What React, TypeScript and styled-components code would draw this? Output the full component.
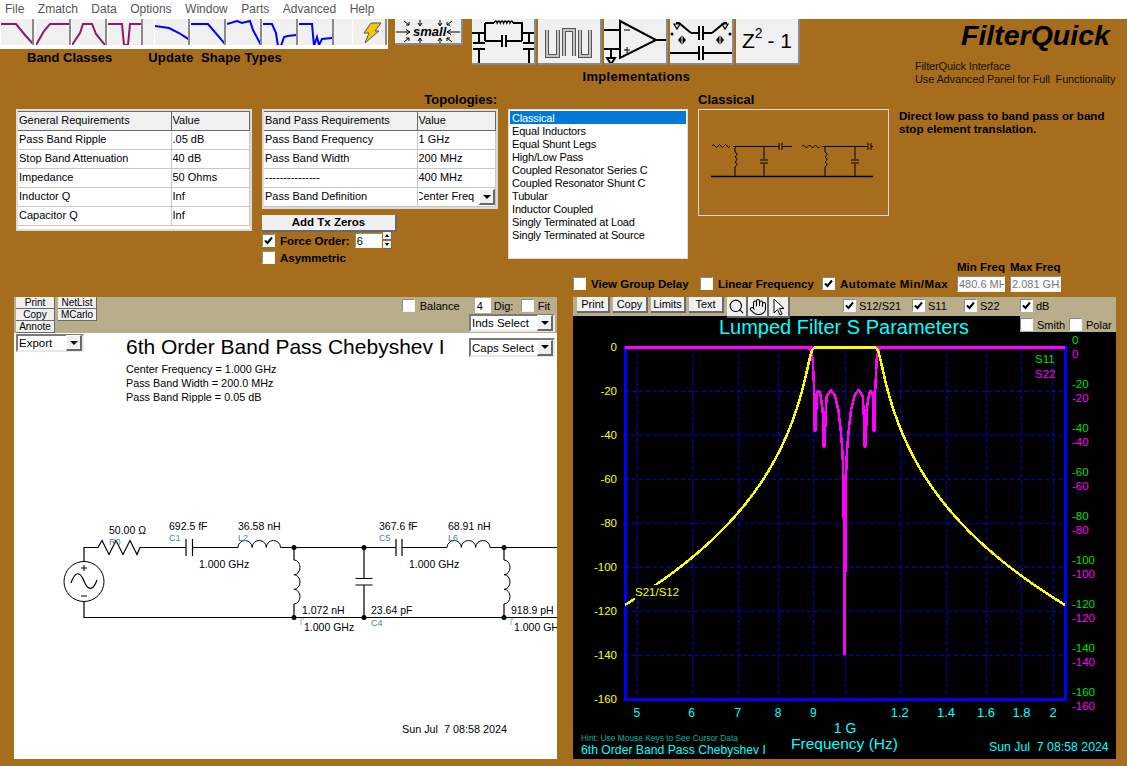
import React from 'react';
import styled, {createGlobalStyle} from 'styled-components';
import {Hand, Search} from 'lucide-react';

const BROWN = '#a56d1c';
const TAN = '#b8ae8b';
const FACE = '#f0f0f0';
const SANS = '"Liberation Sans", Arial, sans-serif';

const GlobalStyle = createGlobalStyle`
  html, body {
    margin: 0;
    padding: 0;
    overflow: hidden;
    background: ${BROWN};
  }
`;

const Page = styled.div`
  width: 1127px;
  height: 766px;
  display: flex;
  flex-direction: column;
  background: ${BROWN};
  font-family: ${SANS};
  font-size: 11px;
  color: #000;
`;

// ---------------- menu ----------------

const MenuBar = styled.div`
  height: 19px;
  flex: none;
  display: flex;
  align-items: flex-start;
  gap: 13.5px;
  padding-left: 5px;
  background: #fff;
  font-size: 12px;
  line-height: 18px;
  color: #555;
`;

// ---------------- top toolbars ----------------

const TopRow = styled.div`
  height: 73px;
  flex: none;
  display: flex;
`;

const ShapeTools = styled.div`
  width: 388px;
  flex: none;
`;

const ToolStrip = styled.div`
  height: 30px;
  background: #fff;
`;

const ToolFace = styled.div`
  height: 26px;
  width: 386px;
  display: flex;
  background: ${FACE};
`;

const ToolButton = styled.div<{ $width: number; $gap?: number }>`
  width: ${props => props.$width}px;
  margin-left: ${props => props.$gap || 0}px;
  height: 26px;
  flex: none;
  box-sizing: border-box;
  border-right: 2px solid #8a8a8a;
  border-left: 1px solid #fff;
  overflow: hidden;

  svg {
    display: block;
  }
`;

const ToolLabels = styled.div`
  display: flex;
  gap: 36px;
  padding: 1px 0 0 27px;
`;

const BoldLabel = styled.div`
  font-size: 13px;
  line-height: 16px;
  font-weight: bold;
  white-space: pre;
`;

const ShapeLabel = styled(BoldLabel)`
  letter-spacing: 0.17px;
`;

const SmallButton = styled.div`
  width: 68px;
  height: 26px;
  flex: none;
  margin-left: 7px;
  box-sizing: border-box;
  background: ${FACE};
  border-right: 2px solid #8a8a8a;
  border-bottom: 2px solid #8a8a8a;

  svg {
    display: block;
  }
`;

const Implementations = styled.div`
  width: 329px;
  flex: none;
  margin-left: 9px;
  display: flex;
  flex-direction: column;
  align-items: center;
`;

const ImplRow = styled.div`
  display: flex;
  gap: 2px;
  width: 329px;
`;

const ImplButton = styled.div`
  width: 64px;
  height: 46px;
  flex: none;
  box-sizing: border-box;
  background: ${FACE};
  border-right: 2px solid #8a8a8a;
  border-bottom: 2px solid #8a8a8a;
  display: flex;
  align-items: center;
  justify-content: center;
  overflow: hidden;
  font-size: 21px;
  white-space: nowrap;

  svg {
    display: block;
    flex: none;
  }

  sup {
    font-size: 14px;
    line-height: 1;
    position: relative;
    top: -8px;
    margin-right: 5px;
  }
`;

const ImplLabel = styled(BoldLabel)`
  margin-top: 4px;
  letter-spacing: 0.3px;
`;

const Brand = styled.div`
  margin-left: 114px;
  flex: 1;
  display: flex;
  flex-direction: column;
`;

const BrandName = styled.div`
  font-size: 28.500px;
  line-height: 33px;
  font-weight: bold;
  font-style: italic;
  margin: 0 0 8px 46px;
`;

const BrandText = styled.div`
  font-size: 11px;
  line-height: 13px;
  letter-spacing: -0.15px;
  color: #1a1208;
  white-space: pre;
`;

// ---------------- requirements row ----------------

const RequirementsRow = styled.div`
  height: 169px;
  flex: none;
  display: flex;
  gap: 10px;
  padding: 0 0 0 16px;
`;

const Column = styled.div<{ $width: number }>`
  width: ${props => props.$width}px;
  flex: none;
  display: flex;
  flex-direction: column;
`;

const ColumnHead = styled(BoldLabel)<{ $right?: boolean }>`
  height: 17px;
  flex: none;
  text-align: ${props => props.$right ? 'right' : 'left'};
  padding-right: ${props => props.$right ? 1 : 0}px;
`;

const TableFrame = styled.div`
  width: 236px;
  flex: none;
  box-sizing: border-box;
  border: 2px solid #dcdcdc;
  background: #fff;
  overflow: hidden;
`;

const Table = styled.table`
  width: 232px;
  table-layout: fixed;
  border-collapse: collapse;
  font-size: 11px;

  col:first-child {
    width: 153px;
  }
`;

const HeadCell = styled.th`
  height: 19px;
  padding: 0 0 2px 1px;
  box-sizing: border-box;
  text-align: left;
  font-weight: normal;
  background: ${FACE};
  border-top: 1px solid #696969;
  border-right: 1px solid #696969;
  border-bottom: 1px solid #696969;
  white-space: nowrap;
`;

const Cell = styled.td`
  height: 19px;
  padding: 0 0 2px 1px;
  box-sizing: border-box;
  border-right: 1px solid #c8c8c8;
  border-bottom: 1px solid #c8c8c8;
  white-space: nowrap;
  overflow: hidden;
`;

const DropCell = styled(Cell)`
  padding-bottom: 0;
`;

const GridTail = styled.div`
  height: 3px;
`;

const ClippedValue = styled.div`
  display: flex;
  align-items: center;
  justify-content: space-between;
  overflow: hidden;

  span {
    margin: 0 0 2px -3px;
  }
`;

const ArrowButton = styled.div`
  width: 16px;
  height: 16px;
  flex: none;
  box-sizing: border-box;
  background: ${FACE};
  border-right: 2px solid #696969;
  border-bottom: 2px solid #696969;
  border-top: 1px solid #fff;
  border-left: 1px solid #fff;
  display: flex;
  align-items: center;
  justify-content: center;

  &::after {
    content: '';
    border-left: 4px solid transparent;
    border-right: 4px solid transparent;
    border-top: 4px solid #000;
  }
`;

const AddButton = styled.div`
  width: 135px;
  height: 17px;
  flex: none;
  margin-top: 6px;
  box-sizing: border-box;
  background: ${FACE};
  border-right: 2px solid #696969;
  border-bottom: 2px solid #696969;
  text-align: center;
  font-size: 11.500px;
  line-height: 15px;
  font-weight: bold;
`;

const ToggleRow = styled.label<{ $width?: number; $bold?: boolean; $gap?: number; $spacing?: number }>`
  display: flex;
  align-items: center;
  height: 17px;
  flex: none;
  width: ${props => props.$width ? props.$width + 'px' : 'auto'};
  gap: ${props => props.$gap || 4}px;
  font-size: ${props => props.$bold ? 11.5 : 11}px;
  font-weight: ${props => props.$bold ? 'bold' : 'normal'};
  letter-spacing: ${props => props.$spacing || 0}px;
  white-space: nowrap;
`;

const CheckBox = styled.span`
  width: 13px;
  height: 13px;
  flex: none;
  box-sizing: border-box;
  background: #fff;
  border: 1px solid;
  border-color: #8a8a8a #f4f4f4 #f4f4f4 #8a8a8a;

  svg {
    display: block;
  }
`;

const Check = ({on}: { on?: boolean }) => (
    <CheckBox>
        {on && <svg width="11" height="11" viewBox="0 0 11 11">
            <path d="M2 5.500 L4.500 8 L9 2.500" fill="none" stroke="#000" strokeWidth="2"/>
        </svg>}
    </CheckBox>
);

const SpinInput = styled.div`
  width: 27px;
  height: 15px;
  box-sizing: border-box;
  background: #fff;
  border: 1px solid;
  border-color: #8a8a8a #f4f4f4 #f4f4f4 #8a8a8a;
  padding-left: 1px;
  font-size: 11px;
  font-weight: normal;
  line-height: 14px;
`;

const Spinner = styled.div`
  width: 9px;
  height: 17px;
  margin-left: -4px;
  display: flex;
  flex-direction: column;
  gap: 1px;

  span {
    flex: 1;
    background: ${FACE};
    border-right: 1px solid #696969;
    border-bottom: 1px solid #696969;
    display: flex;
    align-items: center;
    justify-content: center;
  }
`;

const SpinUp = styled.i`
  border-left: 2px solid transparent;
  border-right: 2px solid transparent;
  border-bottom: 3px solid #000;
`;

const SpinDown = styled.i`
  border-left: 2px solid transparent;
  border-right: 2px solid transparent;
  border-top: 3px solid #000;
`;

const ListBox = styled.div`
  width: 180px;
  height: 150px;
  flex: none;
  box-sizing: border-box;
  background: #fff;
  border: 1px solid #dcdcdc;
  padding: 1px 1px 0 1px;
  overflow: hidden;
`;

const ListItem = styled.div<{ $selected?: boolean }>`
  height: 13px;
  line-height: 14px;
  padding-left: 2px;
  font-size: 11px;
  letter-spacing: -0.17px;
  white-space: nowrap;
  background: ${props => props.$selected ? '#0078d7' : 'transparent'};
  color: ${props => props.$selected ? '#fff' : '#000'};
`;

const TopologyBox = styled.div`
  width: 191px;
  height: 107px;
  flex: none;
  box-sizing: border-box;
  border: 1px solid #d8d8d8;

  svg {
    display: block;
  }
`;

const Description = styled.div`
  margin-top: 17px;
  font-size: 11.600px;
  line-height: 13px;
  font-weight: bold;
  width: 215px;
`;

// ---------------- view options ----------------

const OptionsRow = styled.div`
  height: 36px;
  flex: none;
  display: flex;
  align-items: flex-end;
  padding: 0 0 5px 573px;
  box-sizing: border-box;
`;

const FreqColumn = styled.div<{ $width: number }>`
  width: ${props => props.$width}px;
  flex: none;
  margin-right: 5px;
  display: flex;
  flex-direction: column;
  gap: 3px;
  font-size: 11.500px;
  font-weight: bold;
  line-height: 12px;
  white-space: nowrap;
`;

const FreqInput = styled.div`
  height: 16px;
  box-sizing: border-box;
  background: #fff;
  border: 1px solid;
  border-color: #8a8a8a #f4f4f4 #f4f4f4 #8a8a8a;
  padding-left: 1px;
  overflow: hidden;
  font-size: 11px;
  font-weight: normal;
  line-height: 14px;
  color: #777;
`;

// ---------------- panels ----------------

const Panels = styled.div`
  height: 462px;
  flex: none;
  display: flex;
  gap: 16px;
  padding-left: 14px;
`;

const SchematicPanel = styled.div`
  width: 543px;
  flex: none;
  display: flex;
  flex-direction: column;
`;

const SchematicBar = styled.div`
  height: 36px;
  flex: none;
  display: flex;
  gap: 3px;
  padding-left: 2px;
  background: ${TAN};
`;

const MiniColumn = styled.div`
  display: flex;
  flex-direction: column;
`;

const MiniButton = styled.div`
  width: 39px;
  height: 12px;
  box-sizing: border-box;
  background: ${FACE};
  border-right: 1px solid #696969;
  border-bottom: 1px solid #696969;
  text-align: center;
  font-size: 10px;
  line-height: 11px;
`;

const SchematicControls = styled.div`
  margin-left: auto;
  padding-right: 2px;
  display: flex;
  flex-direction: column;
  align-items: flex-end;
`;

const ControlLine = styled.div`
  height: 17px;
  display: flex;
  align-items: center;
  padding-right: 5px;
  font-size: 11px;
`;

const DigitInput = styled.div`
  width: 16px;
  height: 15px;
  box-sizing: border-box;
  margin-right: 3px;
  background: #fff;
  padding-left: 2px;
  line-height: 16px;
`;

const DigLabel = styled.span`
  width: 27px;
  flex: none;
`;

const Dropdown = styled.div<{ $width: number; $height?: number }>`
  width: ${props => props.$width}px;
  height: ${props => props.$height || 18}px;
  box-sizing: border-box;
  flex: none;
  display: flex;
  align-items: center;
  justify-content: space-between;
  padding-left: 1px;
  background: #fff;
  border: 2px solid;
  border-color: #7a7a7a #e8e8e8 #e8e8e8 #7a7a7a;
  font-size: 11.500px;
`;

const SchematicBody = styled.div`
  flex: 1;
  display: flex;
  flex-direction: column;
  background: #fff;
  overflow: hidden;

  > svg {
    display: block;
    flex: none;
    margin-top: 105px;
  }
`;

const HeadingGrid = styled.div`
  display: grid;
  grid-template-columns: 110px 1fr auto;
  padding: 1px 2px 0 2px;
`;

const CapsHolder = styled.div`
  padding-top: 4px;
`;

const SheetTitle = styled.div`
  font-size: 21px;
  line-height: 24px;
  margin-top: 1px;
`;

const SheetLines = styled.div`
  margin-top: 3px;
  font-size: 10.800px;
  line-height: 14px;
`;

const SheetDate = styled.div`
  margin-top: 73px;
  padding-right: 50px;
  text-align: right;
  font-size: 10.800px;
  line-height: 14px;
  white-space: pre;
`;

const ChartPanel = styled.div`
  width: 543px;
  flex: none;
  display: flex;
  flex-direction: column;
`;

const ChartBar = styled.div`
  height: 19px;
  flex: none;
  position: relative;
  z-index: 1;
  display: flex;
  padding-left: 4px;
  background: ${TAN};
`;

const BarButton = styled.div<{ $width: number }>`
  width: ${props => props.$width}px;
  height: 16px;
  margin-right: 3px;
  box-sizing: border-box;
  flex: none;
  background: ${FACE};
  border-right: 2px solid #696969;
  border-bottom: 2px solid #696969;
  text-align: center;
  font-size: 11px;
  line-height: 15px;
`;

const IconButton = styled.div`
  width: 21px;
  height: 21px;
  flex: none;
  box-sizing: border-box;
  background: ${FACE};
  border-right: 2px solid #696969;
  border-bottom: 2px solid #696969;
  display: flex;
  align-items: center;
  justify-content: center;
`;

const IconGroup = styled.div`
  display: flex;
  margin-right: 53px;
`;

const ChartArea = styled.div`
  flex: 1;
  position: relative;
  background: #000;

  svg {
    display: block;
  }
`;

const ModeBox = styled.div`
  position: absolute;
  top: 0;
  right: 0;
  width: 96px;
  height: 16px;
  display: flex;
  background: ${TAN};
`;

const ChartText = styled.text<{ $color: string; $size: number }>`
  fill: ${props => props.$color};
  font-size: ${props => props.$size}px;
  font-family: ${SANS};
`;

const SchematicText = styled.text<{ $tag?: boolean }>`
  fill: ${props => props.$tag ? '#4c7f9e' : '#000'};
  font-size: ${props => props.$tag ? 9 : 10.5}px;
  font-family: ${SANS};
`;

// ---------------- data ----------------

const menuItems = ['File', 'Zmatch', 'Data', 'Options', 'Window', 'Parts', 'Advanced', 'Help'];

const bandShapes = [
    {width: 34, gap: 0, points: '0,5 15,5 24,16 33,26'},
    {width: 36, gap: 1, points: '0,26 8,12 14,5 34,5'},
    {width: 36, gap: 0, points: '0,26 8,14 11,5 20,5 24,15 33,26'},
    {width: 36, gap: 0, points: '0,5 14,5 16,26 20,26 22,5 36,5'},
];

const updateShapes = [
    '0,7 14,9 24,14 35,21',
    '0,5 17,5 34,25',
    '0,5 10,2 15,4 23,2 26,11 34,26',
    '0,5 9,5 13,14 15,27 18,27 21,18 25,17 34,16',
    '0,5 13,5 15,27 18,18 20,26 23,20 34,19',
];

const generalRows = [
    ['Pass Band Ripple', '.05 dB'],
    ['Stop Band Attenuation', '40 dB'],
    ['Impedance', '50 Ohms'],
    ['Inductor Q', 'Inf'],
    ['Capacitor Q', 'Inf'],
];

const bandRows = [
    ['Pass Band Frequency', '1 GHz'],
    ['Pass Band Width', '200 MHz'],
    ['---------------', '400 MHz'],
];

const topologies = [
    'Classical', 'Equal Inductors', 'Equal Shunt Legs', 'High/Low Pass', 'Coupled Resonator Series C',
    'Coupled Resonator Shunt C', 'Tubular', 'Inductor Coupled', 'Singly Terminated at Load', 'Singly Terminated at Source',
];

const PLOT = {left: 625, right: 1065, top: 347, bottom: 699};
const freqX = (f: number) => PLOT.left + Math.log(f / 0.4806) * 300.2;
const dbY = (db: number) => PLOT.top - db * 2.2;

const minorTicks = [0.5, 0.6, 0.7, 0.8, 0.9, 1, 1.2, 1.4, 1.6, 1.8, 2];
const tickLabels = [
    {f: 0.5, text: '5', size: 12}, {f: 0.6, text: '6', size: 12}, {f: 0.7, text: '7', size: 12},
    {f: 0.8, text: '8', size: 12}, {f: 0.9, text: '9', size: 12}, {f: 1.2, text: '1.2', size: 13},
    {f: 1.4, text: '1.4', size: 13}, {f: 1.6, text: '1.6', size: 13}, {f: 1.8, text: '1.8', size: 13},
    {f: 2, text: '2', size: 13},
];
const dbLevels = [0, -20, -40, -60, -80, -100, -120, -140, -160];

// S21 of the 6th order Chebyshev band pass, worked out for each pixel column
const s21Points = () => {
    const out: string[] = [];
    for (let px = PLOT.left; px <= PLOT.right; px++) {
        const f = 0.4806 * Math.exp((px - PLOT.left) / 300.2);
        const x = Math.abs((f - 1 / f) / 0.2);
        const t = x <= 1 ? Math.cos(6 * Math.acos(x)) : Math.cosh(6 * Math.acosh(x));
        const db = -10 * Math.log10(1 + 0.0075 * t * t);
        out.push(px + ',' + (dbY(db) + 0.5).toFixed(1));
    }
    return out.join(' ');
};

// S22 in band: read off the trace, the two sides mirror round 1 GHz
const s22Half: [number, number][] = [
    [-38, 347], [-36, 348], [-34, 350], [-33, 354], [-32, 360], [-30.5, 390], [-30, 431], [-29, 431], [-28, 393],
    [-25.7, 390.7], [-24, 396], [-22, 410], [-21, 447], [-20, 447], [-19, 412], [-18, 396], [-14, 390], [-10, 395],
    [-6.3, 410], [-3.7, 433], [-2.2, 453], [-1.2, 480],
];

const s22Points = () => {
    const c = 844.7;
    const left = s22Half.map(([dx, y]) => (c + dx) + ',' + y);
    const right = [...s22Half].reverse().map(([dx, y]) => (c - dx) + ',' + y);
    return [PLOT.left + ',347', ...left, c + ',655', ...right, PLOT.right + ',347'].join(' ');
};

// ---------------- drawings ----------------

const BandIcon = ({points, color}: { points: string; color: string }) => (
    <svg width="36" height="26" viewBox="0 0 36 26">
        <polyline points={points} fill="none" stroke={color} strokeWidth="2"/>
    </svg>
);

const Coil = ({x, y, length, vertical}: { x: number; y: number; length: number; vertical?: boolean }) => {
    const step = length / 3;
    let d = `M${x} ${y}`;
    for (let i = 0; i < 3; i++) {
        d += vertical
            ? ` a6 ${step / 2} 0 0 1 0 ${step}`
            : ` a${step / 2} 7 0 0 1 ${step} 0`;
    }
    return <path d={d} fill="none" stroke="#000" strokeWidth="1"/>;
};

const Wire = ({d}: { d: string }) => <path d={d} fill="none" stroke="#000" strokeWidth="1.2"/>;

const Dot = ({x, y}: { x: number; y: number }) => <circle cx={x} cy={y} r="2.5" fill="#000"/>;

const SmallIcon = () => (
    <svg width="66" height="24" viewBox="0 0 66 24">
        <g fill="none" stroke="#000" strokeWidth="1">
            <path d="M1 13 H15 M11 10.500 L15 13 L11 15.500 M65 13 H52 M56 10.500 L52 13 L56 15.500"/>
            <path d="M9 2 L14 6 M14 3 V6 H11 M25 1 V6 M23 4 L25 7 L27 4 M45 1 V6 M43 4 L45 7 L47 4 M57 2 L52 6 M52 3 V6 H55"/>
            <path d="M9 23 L14 19 M11 19 H14 V22 M25 24 V20 M23 22 L25 19 L27 22 M45 24 V20 M43 22 L45 19 L47 22 M57 23 L52 19 M55 19 H52 V22"/>
        </g>
        <text x="18" y="17" fontFamily={SANS} fontSize="13" fontWeight="bold" fontStyle="italic">small</text>
    </svg>
);

const PiIcon = () => (
    <svg width="62" height="44" viewBox="0 0 62 44">
        <path fill="none" stroke="#000" strokeWidth="2"
              d="M0 14 H13 M13 4 V22 M13 4 H22 M41 4 H50 V22 M13 22 H30 M30 16 V28 M34 16 V28 M34 22 H50 M50 14 H62 M7 14 V24 M1 24 H13 M1 30 H13 M7 30 V44 M57 14 V24 M51 24 H62 M51 30 H62 M57 30 V44"/>
        <path fill="none" stroke="#000" strokeWidth="1.5" d="M22 4 q2 -4 3.200 0 q2 -4 3.200 0 q2 -4 3.200 0 q2 -4 3.200 0 q2 -4 3.200 0 q2 -4 3 0"/>
    </svg>
);

const MeanderIcon = () => {
    const d = 'M9 11 V37 H20 V11 M26 37 V11 H36 V37 M42 11 V37 H52 V11';
    return (
        <svg width="62" height="44" viewBox="0 0 62 44">
            <path d={d} fill="none" stroke="#555" strokeWidth="4"/>
            <path d={d} fill="none" stroke="#c4c4c4" strokeWidth="2"/>
        </svg>
    );
};

const OpAmpIcon = () => (
    <svg width="62" height="44" viewBox="0 0 62 44">
        <path fill="none" stroke="#000" strokeWidth="2"
              d="M16 2 V39 L52 21 Z M0 11 H16 M0 30 H16 M52 21 H63 M7 30 V39 M3 39 H11 L7 45 Z"/>
        <path fill="none" stroke="#000" strokeWidth="1" d="M20 11 H26 M20 31 H26 M23 28 V34"/>
    </svg>
);

const SwitchIcon = () => (
    <svg width="62" height="44" viewBox="0 0 62 44">
        <path fill="none" stroke="#000" strokeWidth="2"
              d="M0 34 H29 M29 27 V41 M33 27 V41 M33 34 H62 M21 14 H29 M29 7 V21 M33 7 V21 M33 14 H42 M21 14 L9 4 H6 M42 14 L54 4 H57"/>
        <path d="M12 16 l4 5 l-4 5 l-4 -5 Z M50 16 l4 5 l-4 5 l-4 -5 Z" fill="#000"/>
        <path d="M12 16 V26 M50 16 V26" stroke="#fff" strokeWidth="1"/>
        <path d="M4 5 h6 l-3 5 Z M52 5 h6 l-3 5 Z" fill="none" stroke="#000" strokeWidth="1.2"/>
        <circle cx="2" cy="15" r="1.5" fill="#000"/>
        <circle cx="60" cy="15" r="1.5" fill="#000"/>
    </svg>
);

const TopologyDrawing = () => (
    <svg width="189" height="105" viewBox="699 110 189 105">
        <g fill="none" stroke="#000" strokeWidth="1">
            <path d="M712 146 q1.500 -3 3 0 t3 0 t3 0 t3 0 t3 0 t3 0"/>
            <path d="M733 146.500 H779 M782 146.500 H792 M802 146.500 q1.500 -3 3 0 t3 0 t3 0 t3 0 t3 0 t3 0 M822 146.500 H868 M871 146.500 H873"/>
            <path d="M779 143 V150 M782 143 V150 M868 143 V150 M871 143 V150"/>
            <path d="M735 147 V152 q4 2 0 5 q4 2 0 5 q4 2 0 5 V176"/>
            <path d="M825 147 V152 q4 2 0 5 q4 2 0 5 q4 2 0 5 V176"/>
            <path d="M764 147 V159 M760 160 H768 M760 163 H768 M764 164 V176"/>
            <path d="M855 147 V159 M851 160 H859 M851 163 H859 M855 164 V176"/>
        </g>
        <path d="M711 176.500 H873" stroke="#000" strokeWidth="1.4"/>
    </svg>
);

const Schematic = () => (
    <svg width="543" height="140" viewBox="14 510 543 140">
        <Wire d="M84 563 V548.500 H98 l4 -7 l7 14 l7 -14 l7 14 l7 -14 l7 14 l3 -7 H186 M186 540 V557 M192.500 540 V557 M192.500 548.500 H238"/>
        <Coil x={238} y={548.5} length={42.5}/>
        <Wire d="M280.500 548.500 H396 M396 540 V557 M402 540 V557 M402 548.500 H447"/>
        <Coil x={447} y={548.5} length={43}/>
        <Wire d="M490 548.500 H557 M84 602 V618.500 H557"/>
        <Wire d="M294 548.500 V561"/>
        <Coil x={294} y={561} length={44} vertical/>
        <Wire d="M294 605 V618.500 M364 548.500 V579.500 M355.500 579.500 H372.500 M355.500 586 H372.500 M364 586 V618.500 M504 548.500 V561"/>
        <Coil x={504} y={561} length={44} vertical/>
        <Wire d="M504 605 V618.500"/>
        <Dot x={294} y={548.5}/><Dot x={364} y={548.5}/><Dot x={504} y={548.5}/>
        <Dot x={294} y={618.5}/><Dot x={364} y={618.5}/><Dot x={504} y={618.5}/>
        <circle cx="84" cy="582.500" r="20" fill="none" stroke="#000" strokeWidth="1"/>
        <path d="M71 584 c4 -12 9 -12 13 -2 c4 10 9 10 13 -1" fill="none" stroke="#000" strokeWidth="1.2"/>
        <path d="M81 569 H87 M84 566 V572 M81 597 H87" stroke="#000" strokeWidth="1"/>
        <path d="M301 626 V620 H304 M511 626 V620 H514" fill="none" stroke="#9fb4c4" strokeWidth="1"/>

        <SchematicText x={109} y={535}>50.00 Ω</SchematicText>
        <SchematicText $tag x={109} y={546}>R0</SchematicText>
        <SchematicText x={169} y={531}>692.5 fF</SchematicText>
        <SchematicText $tag x={169} y={542}>C1</SchematicText>
        <SchematicText x={238} y={531}>36.58 nH</SchematicText>
        <SchematicText $tag x={238} y={542}>L2</SchematicText>
        <SchematicText x={199} y={569}>1.000 GHz</SchematicText>
        <SchematicText x={379} y={531}>367.6 fF</SchematicText>
        <SchematicText $tag x={379} y={542}>C5</SchematicText>
        <SchematicText x={448} y={531}>68.91 nH</SchematicText>
        <SchematicText $tag x={448} y={542}>L6</SchematicText>
        <SchematicText x={409} y={569}>1.000 GHz</SchematicText>
        <SchematicText x={302} y={615}>1.072 nH</SchematicText>
        <SchematicText x={371} y={615}>23.64 pF</SchematicText>
        <SchematicText $tag x={371} y={627}>C4</SchematicText>
        <SchematicText x={304} y={632}>1.000 GHz</SchematicText>
        <SchematicText x={511} y={615}>918.9 pH</SchematicText>
        <SchematicText x={514} y={632}>1.000 GHz</SchematicText>
    </svg>
);

const Chart = () => (
    <svg width="543" height="443" viewBox="573 316 543 443">
        <g stroke="#0000e0" strokeWidth="1" strokeDasharray="4 3" fill="none" shapeRendering="crispEdges">
            {minorTicks.map(f => <line key={f} x1={Math.round(freqX(f)) + .5} x2={Math.round(freqX(f)) + .5} y1={PLOT.top} y2={PLOT.bottom}/>)}
            {dbLevels.slice(1, -1).map(db => <line key={db} x1={PLOT.left} x2={PLOT.right} y1={dbY(db) + .5} y2={dbY(db) + .5}/>)}
        </g>
        <rect x={PLOT.left + .5} y={PLOT.top + .5} width={PLOT.right - PLOT.left} height={PLOT.bottom - PLOT.top}
              fill="none" stroke="#0000ff" strokeWidth="3" shapeRendering="crispEdges"/>
        <path d="M806 347 H816 L812 353 Z M873 347 H884 L877 353 Z" fill="#0000ff"/>
        <polyline points={s22Points()} fill="none" stroke="#ff00ff" strokeWidth="2.5" strokeLinejoin="bevel" shapeRendering="crispEdges"/>
        <line x1={PLOT.left} x2={PLOT.right} y1={347.5} y2={347.5} stroke="#ff00ff" strokeWidth="3" shapeRendering="crispEdges"/>
        <polyline points={s21Points()} fill="none" stroke="#ffff00" strokeWidth="2.5" shapeRendering="crispEdges"/>

        <rect x={635} y={585} width={42} height={15} fill="#000"/>
        <ChartText $color="#ffff00" $size={11.500} x={635} y={596}>S21/S12</ChartText>

        <ChartText $color="#00ffff" $size={20} x={844} y={334} textAnchor="middle">Lumped Filter S Parameters</ChartText>

        {dbLevels.map((db, i) => (
            <React.Fragment key={db}>
                <ChartText $color="#ffff00" $size={11.500} x={617} y={dbY(db) + 4} textAnchor="end">{db}</ChartText>
                <ChartText $color="#00e000" $size={11.500} x={1072} y={344 + i * 44}>{db}</ChartText>
                <ChartText $color="#ff00ff" $size={11.500} x={1072} y={358 + i * 44}>{db}</ChartText>
            </React.Fragment>
        ))}

        <ChartText $color="#00e000" $size={11.500} x={1035} y={363}>S11</ChartText>
        <ChartText $color="#ff00ff" $size={11.500} x={1035} y={378}>S22</ChartText>

        {tickLabels.map(t => (
            <ChartText key={t.text} $color="#00ffff" $size={t.size} x={freqX(t.f)} y={717} textAnchor="middle">{t.text}</ChartText>
        ))}
        <ChartText $color="#00ffff" $size={14} x={845} y={733} textAnchor="middle">1 G</ChartText>
        <ChartText $color="#00ffff" $size={15.500} x={844.500} y={749} textAnchor="middle">Frequency (Hz)</ChartText>
        <ChartText $color="#00b0a0" $size={8.400} x={581} y={741}>Hint: Use Mouse Keys to See Cursor Data</ChartText>
        <ChartText $color="#00ffff" $size={12.200} x={581} y={754}>6th Order Band Pass Chebyshev I</ChartText>
        <ChartText $color="#00ffff" $size={12.300} x={989} y={751} xmlSpace="preserve">Sun Jul  7 08:58 2024</ChartText>
    </svg>
);

// ---------------- page ----------------

const App = () => {
    return (
        <Page>
            <GlobalStyle/>
            <MenuBar>
                {menuItems.map(m => <span key={m}>{m}</span>)}
            </MenuBar>

            <TopRow>
                <ShapeTools>
                    <ToolStrip>
                        <ToolFace>
                            {bandShapes.map(s => (
                                <ToolButton key={s.points} $width={s.width} $gap={s.gap}>
                                    <BandIcon points={s.points} color="#8f1a66"/>
                                </ToolButton>
                            ))}
                            {updateShapes.map((points, i) => (
                                <ToolButton key={points} $width={36} $gap={i === 0 ? 11 : 0}>
                                    <BandIcon points={points} color="#0000ff"/>
                                </ToolButton>
                            ))}
                            <ToolButton $width={35} $gap={18}>
                                <svg width="33" height="26" viewBox="0 0 33 26">
                                    <polygon points="18,4 28,4 22,12 26,12 12,24 16,14 11,14" fill="#f2c518" stroke="#5a5a3a" strokeWidth="1"/>
                                </svg>
                            </ToolButton>
                        </ToolFace>
                    </ToolStrip>
                    <ToolLabels>
                        <BoldLabel>Band Classes</BoldLabel>
                        <ShapeLabel>{'Update  Shape Types'}</ShapeLabel>
                    </ToolLabels>
                </ShapeTools>

                <SmallButton><SmallIcon/></SmallButton>

                <Implementations>
                    <ImplRow>
                        <ImplButton><PiIcon/></ImplButton>
                        <ImplButton><MeanderIcon/></ImplButton>
                        <ImplButton><OpAmpIcon/></ImplButton>
                        <ImplButton><SwitchIcon/></ImplButton>
                        <ImplButton>Z<sup>2</sup>- 1</ImplButton>
                    </ImplRow>
                    <ImplLabel>Implementations</ImplLabel>
                </Implementations>

                <Brand>
                    <BrandName>FilterQuick</BrandName>
                    <BrandText>FilterQuick Interface</BrandText>
                    <BrandText>{'Use Advanced Panel for Full  Functionality'}</BrandText>
                </Brand>
            </TopRow>

            <RequirementsRow>
                <Column $width={236}>
                    <ColumnHead/>
                    <TableFrame>
                        <Table>
                            <colgroup><col/><col/></colgroup>
                            <thead>
                            <tr><HeadCell>General Requirements</HeadCell><HeadCell>Value</HeadCell></tr>
                            </thead>
                            <tbody>
                            {generalRows.map(r => <tr key={r[0]}><Cell>{r[0]}</Cell><Cell>{r[1]}</Cell></tr>)}
                            </tbody>
                        </Table>
                        <GridTail/>
                    </TableFrame>
                </Column>

                <Column $width={236}>
                    <ColumnHead $right>Topologies:</ColumnHead>
                    <TableFrame>
                        <Table>
                            <colgroup><col/><col/></colgroup>
                            <thead>
                            <tr><HeadCell>Band Pass Requirements</HeadCell><HeadCell>Value</HeadCell></tr>
                            </thead>
                            <tbody>
                            {bandRows.map(r => <tr key={r[1]}><Cell>{r[0]}</Cell><Cell>{r[1]}</Cell></tr>)}
                            <tr>
                                <Cell>Pass Band Definition</Cell>
                                <DropCell><ClippedValue><span>Center Freq</span><ArrowButton/></ClippedValue></DropCell>
                            </tr>
                            </tbody>
                        </Table>
                    </TableFrame>
                    <AddButton>Add Tx Zeros</AddButton>
                    <ToggleRow $bold $gap={5}>
                        <Check on/>
                        <span>Force Order:</span>
                        <SpinInput>6</SpinInput>
                        <Spinner><span><SpinUp/></span><span><SpinDown/></span></Spinner>
                    </ToggleRow>
                    <ToggleRow $bold $gap={5}><Check/><span>Asymmetric</span></ToggleRow>
                </Column>

                <Column $width={180}>
                    <ColumnHead/>
                    <ListBox>
                        {topologies.map((t, i) => <ListItem key={t} $selected={i === 0}>{t}</ListItem>)}
                    </ListBox>
                </Column>

                <Column $width={191}>
                    <ColumnHead>Classical</ColumnHead>
                    <TopologyBox><TopologyDrawing/></TopologyBox>
                </Column>

                <Description>Direct low pass to band pass or band stop element translation.</Description>
            </RequirementsRow>

            <OptionsRow>
                <ToggleRow $bold $width={127} $gap={5}><Check/><span>View Group Delay</span></ToggleRow>
                <ToggleRow $bold $width={122} $gap={5}><Check/><span>Linear Frequency</span></ToggleRow>
                <ToggleRow $bold $width={135} $gap={5} $spacing={0.4}><Check on/><span>Automate Min/Max</span></ToggleRow>
                <FreqColumn $width={48}>Min Freq<FreqInput>480.6 MHz</FreqInput></FreqColumn>
                <FreqColumn $width={51}>Max Freq<FreqInput>2.081 GHz</FreqInput></FreqColumn>
            </OptionsRow>

            <Panels>
                <SchematicPanel>
                    <SchematicBar>
                        <MiniColumn>
                            <MiniButton>Print</MiniButton>
                            <MiniButton>Copy</MiniButton>
                            <MiniButton>Annote</MiniButton>
                        </MiniColumn>
                        <MiniColumn>
                            <MiniButton>NetList</MiniButton>
                            <MiniButton>MCarlo</MiniButton>
                        </MiniColumn>
                        <SchematicControls>
                            <ControlLine>
                                <ToggleRow $width={73} $gap={5}><Check/><span>Balance</span></ToggleRow>
                                <DigitInput>4</DigitInput>
                                <DigLabel>Dig:</DigLabel>
                                <ToggleRow $gap={4}><Check/><span>Fit</span></ToggleRow>
                            </ControlLine>
                            <Dropdown $width={86}>Inds Select<ArrowButton/></Dropdown>
                        </SchematicControls>
                    </SchematicBar>
                    <SchematicBody>
                        <HeadingGrid>
                            <div><Dropdown $width={68}>Export<ArrowButton/></Dropdown></div>
                            <div>
                                <SheetTitle>6th Order Band Pass Chebyshev I</SheetTitle>
                                <SheetLines>
                                    <div>Center Frequency = 1.000 GHz</div>
                                    <div>Pass Band Width = 200.0 MHz</div>
                                    <div>Pass Band Ripple = 0.05 dB</div>
                                </SheetLines>
                            </div>
                            <CapsHolder><Dropdown $width={86} $height={19}>Caps Select<ArrowButton/></Dropdown></CapsHolder>
                        </HeadingGrid>
                        <Schematic/>
                        <SheetDate>{'Sun Jul  7 08:58 2024'}</SheetDate>
                    </SchematicBody>
                </SchematicPanel>

                <ChartPanel>
                    <ChartBar>
                        <BarButton $width={33}>Print</BarButton>
                        <BarButton $width={35}>Copy</BarButton>
                        <BarButton $width={35}>Limits</BarButton>
                        <BarButton $width={35}>Text</BarButton>
                        <IconGroup>
                            <IconButton><Search size={17} strokeWidth={1.5} color="#000"/></IconButton>
                            <IconButton><Hand size={18} strokeWidth={1.4} color="#000"/></IconButton>
                            <IconButton>
                                <svg width="16" height="18" viewBox="0 0 16 18">
                                    <path d="M3 1 V15 L6.500 11.500 L9 17 L11 16 L8.500 10.500 L13 10.500 Z" fill="#fff" stroke="#000" strokeWidth="1"/>
                                </svg>
                            </IconButton>
                        </IconGroup>
                        <ToggleRow $width={69} $gap={3}><Check on/><span>S12/S21</span></ToggleRow>
                        <ToggleRow $width={52} $gap={3}><Check on/><span>S11</span></ToggleRow>
                        <ToggleRow $width={56} $gap={3}><Check on/><span>S22</span></ToggleRow>
                        <ToggleRow $gap={3}><Check on/><span>dB</span></ToggleRow>
                    </ChartBar>
                    <ChartArea>
                        <Chart/>
                        <ModeBox>
                            <ToggleRow $width={49} $gap={4}><Check/><span>Smith</span></ToggleRow>
                            <ToggleRow $gap={4}><Check/><span>Polar</span></ToggleRow>
                        </ModeBox>
                    </ChartArea>
                </ChartPanel>
            </Panels>
        </Page>
    );
};

export default App;
